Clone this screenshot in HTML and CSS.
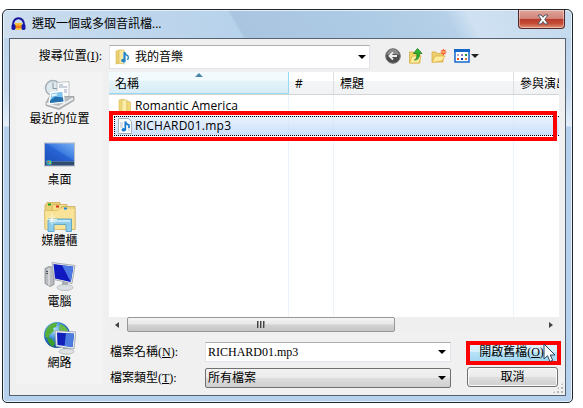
FILE: index.html
```
<!DOCTYPE html>
<html lang="zh-Hant">
<head>
    <meta charset="UTF-8">
    <meta name="viewport" content="width=device-width, initial-scale=1.0">
    <title>選取一個或多個音訊檔...</title>
    <link rel="stylesheet" href="styles.css">
</head>
<body>
    <div class="window">
        <div class="titlebar">
            <svg class="app-icon" width="15" height="15" viewBox="0 0 15 15">
                <path d="M4 6h7v6q-3.500 2-7 0z" fill="#fbc02a"/>
                <path d="M4 9l1-1 1 2 1-3 1 3 1-2 1 1v2H4z" fill="#f0701c"/>
                <path d="M2 9C1 -1.500 14 -1.500 13 9" fill="none" stroke="#14149c" stroke-width="2"/>
                <rect x="0.500" y="7" width="4" height="6" rx="1.800" fill="#1818a8"/>
                <rect x="10.500" y="7" width="4" height="6" rx="1.800" fill="#1818a8"/>
            </svg>
            <span class="title">選取一個或多個音訊檔...</span>
            <button class="close" aria-label="關閉">
                <svg width="12" height="11" viewBox="0 0 12 11">
                    <path d="M1 1h3.200L6 3.300 7.800 1H11L7.800 5.400 11 10H7.800L6 7.600 4.200 10H1l3.200-4.600z" fill="#fff" stroke="#545764" stroke-width="1"/>
                </svg>
            </button>
        </div>

        <div class="client">
            <div class="toolbar">
                <span class="look-label">搜尋位置<span class="key">(<u>I</u>):</span></span>
                <div class="look-in">
                    <svg width="15" height="16" viewBox="0 0 15 16">
                        <path d="M1 2l5-1v13l-5 1z" fill="#ecd070" stroke="#d6b650" stroke-width="0.600"/>
                        <path d="M4 1h5v14l-5-1z" fill="#f8e8a0" stroke="#d6b650" stroke-width="0.600"/>
                        <path d="M8 3l3 1v9l-3 2z" fill="#8ec4e4"/>
                        <path d="M9.500 11V3q1 3 3.500 4 1 2-.5 4" fill="none" stroke="#2684c4" stroke-width="1.400"/>
                        <ellipse cx="8.300" cy="11.500" rx="2.200" ry="1.700" fill="#2684c4"/>
                    </svg>
                    <span>我的音樂</span>
                    <i class="arrow"></i>
                </div>
                <div class="tools">
                    <svg width="16" height="16" viewBox="0 0 16 16">
                        <circle cx="8" cy="8" r="7.300" fill="#4c4c4c" stroke="#777"/>
                        <path d="M2 7a6 6 0 0 1 12 0q-6-2-12 0z" fill="#8c8c8c"/>
                        <path d="M12 8H5M8 4.500L4.500 8 8 11.500" fill="none" stroke="#eee" stroke-width="1.900"/>
                    </svg>
                    <svg width="16" height="16" viewBox="0 0 16 16">
                        <path d="M1.500 4h4l1 1.500H12V15H1.500z" fill="#f0d468" stroke="#d0a838" stroke-width="0.700"/>
                        <path d="M1.500 15L4 8h9l-2 7z" fill="#fbeb9c" stroke="#d8b040" stroke-width="0.700"/>
                        <path d="M6.500 12q3-1 2.300-6.500H5.500L9.500 0.500l4.500 5h-2.700q.5 6.500-4.800 6.500z" fill="#35b535" stroke="#147a1c" stroke-width="0.800"/>
                    </svg>
                    <svg width="16" height="16" viewBox="0 0 16 16">
                        <path d="M1 4h4l1 1.500h6V14H1z" fill="#ecd070" stroke="#d8a838" stroke-width="0.700"/>
                        <path d="M1 14.500L4 8h10l-3 5z" fill="#fcec9c" stroke="#dca93c" stroke-width="0.700"/>
                        <path d="M12.500 1v6.500M9.500 4h6M10.500 2l4 4M14.500 2l-4 4" stroke="#f06436" stroke-width="1.200"/>
                        <circle cx="12.500" cy="4" r="1.300" fill="#ffa060"/>
                    </svg>
                    <svg width="25" height="16" viewBox="0 0 25 16">
                        <rect x="1" y="2" width="14" height="12" fill="#fff" stroke="#1667cc" stroke-width="1.500"/>
                        <path d="M0 1h16v3H0z" fill="#1667cc"/>
                        <path d="M3 6h2v2H3z" fill="#b8a8c8"/>
                        <path d="M7 6h2v2H7z" fill="#8878c8"/>
                        <path d="M11 6h2v2h-2z" fill="#209030"/>
                        <path d="M3 10h2v2H3z" fill="#e85818"/>
                        <path d="M7 10h2v2H7z" fill="#103898"/>
                        <path d="M11 10h2v2h-2z" fill="#d87838"/>
                        <path d="M17 6h8l-4 4z" fill="#222"/>
                    </svg>
                </div>
            </div>

            <div class="content">
                <div class="places">
                    <div class="place">
                        <svg width="32" height="32" viewBox="0 0 32 32">
                            <circle cx="9" cy="9.500" r="7.500" fill="#dfe8ed" stroke="#a4b0b8" stroke-width="1.500"/>
                            <path d="M9 4v6h4" fill="none" stroke="#8898a0"/>
                            <path d="M13 4l12-1v16H13z" fill="#fafafa" stroke="#a8b0b8" stroke-width="0.700"/>
                            <path d="M15 6.500h4M15 8.500h8M20 11.500h3M20 13.500h3" stroke="#98a8c0"/>
                            <path d="M2 24l4-7 18 1 6 0v4l-15 9-13-4z" fill="#b8bcbf" stroke="#8c9498" stroke-width="0.700"/>
                            <path d="M7 14l12-1.500 1 11-15 1.500z" fill="#7cc4ec" stroke="#fff" stroke-width="1.500"/>
                            <path d="M6 22l5-4 8 1 .5 4-13.500 1.500z" fill="#2470b0"/>
                            <path d="M8 15.500l5-.5v2l-5 1z" fill="#e0f4fc"/>
                            <path d="M2.500 25l12 3.500L29 20" fill="none" stroke="#f4f4f4" stroke-width="1.500"/>
                        </svg>
                        <span>最近的位置</span>
                    </div>
                    <div class="place">
                        <svg width="32" height="32" viewBox="0 0 32 32">
                            <defs>
                                <linearGradient id="desk" x1="0" y1="1" x2="1" y2="0">
                                    <stop offset="0" stop-color="#1d50bc"/>
                                    <stop offset="0.500" stop-color="#2864d4"/>
                                    <stop offset="0.550" stop-color="#3d7ce0"/>
                                    <stop offset="1" stop-color="#78b0f4"/>
                                </linearGradient>
                            </defs>
                            <path d="M0 3h31v24H0z" fill="#b4bcc8"/>
                            <path d="M1 4h29v18H1z" fill="url(#desk)"/>
                            <path d="M1 22h29v4H1z" fill="#304c70"/>
                            <circle cx="5" cy="23" r="2.800" fill="#28a0c8"/>
                            <path d="M3.500 21.500H5V23H3.500z" fill="#f07030"/>
                            <path d="M5.500 21.500H7V23H5.500z" fill="#90d840"/>
                            <path d="M5.500 23.500H7v1H5.500z" fill="#fcd040"/>
                        </svg>
                        <span>桌面</span>
                    </div>
                    <div class="place">
                        <svg width="32" height="32" viewBox="0 0 32 32">
                            <path d="M1 5l2-3h13v26H1z" fill="#ecd078" stroke="#c8a448" stroke-width="0.700"/>
                            <path d="M8 7l1-3h14v24H8z" fill="#f4dc88" stroke="#c8a448" stroke-width="0.700"/>
                            <path d="M17 8l1-2h13v23H15z" fill="#f8e498" stroke="#c8a448" stroke-width="0.700"/>
                            <path d="M0.500 10h13l3-2.500H31V29H1z" fill="#f8e398" stroke="#d0b058" stroke-width="0.600"/>
                            <path d="M4 3h3v2H4z" fill="#18a018"/>
                            <path d="M12 5h3v2h-3z" fill="#d82c18"/>
                            <path d="M20 7h3v2h-3z" fill="#1888d8"/>
                            <path d="M4 18.500h23.500V31H22v-7H10v7H4z" fill="#90cdea" stroke="#4c9cc8" stroke-width="0.800"/>
                            <path d="M6 20.500h20" stroke="#d4f0fc" stroke-width="1.500"/>
                            <path d="M8 13v11M3 19h10M5 16l6 6M11 16l-6 6" stroke="#fffef0" stroke-width="0.800"/>
                        </svg>
                        <span>媒體櫃</span>
                    </div>
                    <div class="place">
                        <svg width="32" height="32" viewBox="0 0 32 32">
                            <path d="M1 7l4-2 5 1v17l-4 2-5-3z" fill="#b8bcc0" stroke="#787c80" stroke-width="0.700"/>
                            <path d="M5 7v17" stroke="#f0f0f0"/>
                            <path d="M2 10h2M2 12h2" stroke="#485058"/>
                            <path d="M8 1l23 3-3 18-18-4z" fill="#e4e8ec" stroke="#98a0a8" stroke-width="0.800"/>
                            <path d="M9.500 2.500L29.300 5.200 26.800 20.500 11 17z" fill="#1018c0"/>
                            <path d="M18 3.700l11.300 1.500-2.500 15.300z" fill="#4c78e4"/>
                            <path d="M18 20l6 1v5h-6z" fill="#a4acb0"/>
                            <ellipse cx="21" cy="26" rx="8" ry="3" fill="#dcdfe1" stroke="#a4a8ac" stroke-width="0.600"/>
                        </svg>
                        <span>電腦</span>
                    </div>
                    <div class="place">
                        <svg width="32" height="33" viewBox="0 0 32 33">
                            <defs>
                                <radialGradient id="globe" cx="0.400" cy="0.300" r="0.700">
                                    <stop offset="0" stop-color="#b8e8fc"/>
                                    <stop offset="0.500" stop-color="#3888d0"/>
                                    <stop offset="1" stop-color="#104890"/>
                                </radialGradient>
                            </defs>
                            <circle cx="13" cy="13" r="13" fill="url(#globe)"/>
                            <path d="M4 5q5-5 9-4l-1 4-3 1 1 3-4 3-2 5-3-3q0-6 3-9z" fill="#58b03c"/>
                            <path d="M16 2q6 2 8 7l-5 1-4-2z" fill="#6cbc44"/>
                            <path d="M3 15l5 2 3 4-2 4q-5-3-6-10z" fill="#3ca02c"/>
                            <path d="M11 8.500l21 1.500-2 17-18-2.500z" fill="#e6ecf0" stroke="#8c98a4" stroke-width="0.700"/>
                            <path d="M13 10.500l17 1.200-1.500 13.300-15-2z" fill="#1020b8"/>
                            <path d="M22 11.200l8 .5-1.500 13.300-8-1z" fill="#4c7ce0"/>
                            <path d="M19 25.500l6 .8V30h-6z" fill="#98a4ac"/>
                            <ellipse cx="22.500" cy="29.500" rx="7.500" ry="2.700" fill="#dee2e4" stroke="#a4a8ac" stroke-width="0.600"/>
                        </svg>
                        <span>網路</span>
                    </div>
                </div>

                <div class="main">
                    <div class="list">
                        <div class="head">
                            <span class="col name sorted">名稱<i class="sort"></i></span>
                            <span class="col num">#</span>
                            <span class="col track">標題</span>
                            <span class="col artist">參與演出者</span>
                        </div>
                        <div class="rows">
                            <div class="row folder">
                                <svg width="16" height="16" viewBox="0 0 16 16">
                                    <path d="M2 2l5-1v14l-5-1z" fill="#f0d878" stroke="#d8bc58" stroke-width="0.600"/>
                                    <path d="M5 2h5v13l-5-1z" fill="#faeea8" stroke="#d8bc58" stroke-width="0.600"/>
                                    <path d="M10 3l3.500 1v10L10 15z" fill="#f0d878" stroke="#d8bc58" stroke-width="0.600"/>
                                </svg>
                                <span>Romantic America</span>
                            </div>
                            <div class="row selected">
                                <svg width="16" height="16" viewBox="0 0 16 16">
                                    <path d="M1.500 0.500h10l3 3v12h-13z" fill="#f8fafc" stroke="#a8b0b8"/>
                                    <path d="M3 5h3M3 7h3M3 9h3M11 10h2M11 12h2" stroke="#b8c4d0"/>
                                    <path d="M8.300 12V3.500q.7 3 3.700 3.500v3" fill="none" stroke="#1a7cd0" stroke-width="1.700"/>
                                    <ellipse cx="6.800" cy="11.800" rx="2.300" ry="1.700" fill="#1a7cd0"/>
                                </svg>
                                <span>RICHARD01.mp3</span>
                            </div>
                        </div>
                        <div class="scrollbar">
                            <i class="left"></i>
                            <div class="thumb"><i></i><i></i><i></i></div>
                            <i class="right"></i>
                        </div>
                        <div class="mark file-mark"></div>
                    </div>

                    <div class="form">
                        <span class="form-label">檔案名稱<span class="key">(<u>N</u>):</span></span>
                        <div class="field">RICHARD01.mp3<i class="arrow"></i></div>
                        <div class="open-wrap">
                            <button class="btn open">開啟舊檔<span class="key">(<u>O</u>)</span></button>
                            <div class="mark"></div>
                            <svg class="cursor" width="14" height="20" viewBox="0 0 14 20">
                                <path d="M1 1v15l3.500-3.300L7 18.500l2.700-1.200L7.300 12H12z" fill="#fff" stroke="#28465c"/>
                            </svg>
                        </div>
                        <span class="form-label">檔案類型<span class="key">(<u>T</u>):</span></span>
                        <div class="field drop">所有檔案<i class="arrow"></i></div>
                        <button class="btn">取消</button>
                    </div>
                </div>
            </div>
            <div class="grip"></div>
        </div>
    </div>
</body>
</html>
```

FILE: styles.css
```
* {
    box-sizing: border-box;
}

body {
    margin: 0;
    padding: 9px 0 0 2px;
    background: #fff;
    overflow: hidden;
    font-family: "Open Sans", "Noto Sans CJK TC", sans-serif;
    font-size: 12px;
    line-height: 16px;
    color: #000;
}

svg {
    display: block;
    flex: none;
}

button {
    font: inherit;
    padding: 0;
}

.window {
    width: 571px;
    height: 394px;
    border: 1px solid #1f262c;
    border-radius: 6px 6px 5px 5px;
    background: linear-gradient(#b9d1ea 0, #c5daef 80px, #e4eef9 116px, #b4d0ec 117px, #b6d1ec 100%);
    box-shadow: inset 0 0 0 1px #e6f2fb;
    padding: 0 6px;
}

.titlebar {
    height: 28px;
    margin: 0 -5px;
    padding: 0 6px 0 7px;
    display: flex;
    border-radius: 5px 5px 0 0;
    border-top: 1px solid #e3eef8;
    background: linear-gradient(60deg, #cfdfef 0, #c0d7ed 20%, #b7d2eb 41%, #a9c5df 41.500%, #aecbe5 65%, #b5d0e8 78%, #cfe1f2 82%, #c4d9ed 100%);
}

.app-icon {
    margin-top: 6px;
}

.title {
    margin: 5px 0 0 6px;
    flex: 1;
}

.close {
    width: 47px;
    height: 19px;
    margin-top: -1px;
    display: flex;
    align-items: center;
    justify-content: center;
    border: 1px solid #54272b;
    border-top: 0;
    border-radius: 0 0 4px 4px;
    background: linear-gradient(#e0a79e 0, #d08276 48%, #b83a2a 50%, #c54d38 75%, #e09478 100%);
    box-shadow: inset 0 0 0 1px rgba(255, 255, 255, 0.4);
}

.close svg {
    margin-left: 3px;
}

.client {
    position: relative;
    height: 358px;
    border: 1px solid #56626f;
    background: #f0f0f0;
}

.toolbar {
    height: 33px;
    padding-top: 6px;
    display: flex;
}

.look-label {
    width: 92px;
    padding-top: 3px;
    text-align: right;
}

.key {
    font-family: "Liberation Serif", serif;
}

.look-in {
    width: 261px;
    height: 24px;
    margin-left: 7px;
    padding: 0 3px 0 5px;
    display: flex;
    align-items: center;
    gap: 5px;
    background: #fff;
    border: 1px solid #e2e3ea;
    border-top-color: #abadb3;
}

.arrow {
    width: 0;
    height: 0;
    margin-left: auto;
    border: 4px solid transparent;
    border-top-color: #000;
    border-bottom: 0;
}

.tools {
    display: flex;
    gap: 7px;
    margin: 3px 0 0 15px;
}

.content {
    display: flex;
    gap: 6px;
    padding-left: 6px;
}

.places {
    width: 87px;
    height: 312px;
    padding-top: 6px;
    background: #f3f3f3;
}

.place {
    height: 61px;
    display: flex;
    flex-direction: column;
    align-items: center;
}

.place svg {
    height: 33px;
}

.main {
    width: 450px;
}

.list {
    position: relative;
    height: 260px;
    display: flex;
    flex-direction: column;
    background: #fff;
}

.head {
    height: 23px;
    display: flex;
    overflow: hidden;
    border-bottom: 1px solid #d5d5d5;
    background: linear-gradient(#fff 40%, #f4f5f6 42%, #f1f2f4);
}

.col {
    position: relative;
    flex: none;
    padding: 4px 0 0 6px;
    border-right: 1px solid #dedfe1;
    white-space: nowrap;
}

.name {
    width: 180px;
}

.num {
    width: 45px;
}

.track {
    width: 180px;
}

.artist {
    width: 90px;
    border: 0;
}

.sorted {
    border-right-color: #96d9f9;
    border-bottom: 1px solid #96d9f9;
    background: linear-gradient(#f2fafd 40%, #e3f3f9 42%, #d8ecf6);
}

.sort {
    position: absolute;
    left: 86px;
    top: 1px;
    border: 4px solid transparent;
    border-top: 0;
    border-bottom-color: #4a87a8;
}

.rows {
    flex: 1;
    padding: 1px 0 0 5px;
    background:
        linear-gradient(#edf3fb, #edf3fb) 179px 0 / 1px 100% no-repeat,
        linear-gradient(#edf3fb, #edf3fb) 224px 0 / 1px 100% no-repeat,
        linear-gradient(#edf3fb, #edf3fb) 404px 0 / 1px 100% no-repeat;
}

.row {
    height: 20px;
    padding-left: 3px;
    display: flex;
    align-items: center;
    gap: 2px;
    letter-spacing: 0.250px;
}

.folder {
    letter-spacing: 0.080px;
}

.selected {
    padding-left: 2px;
    border: 1px dotted #000;
    border-right: 0;
    background: linear-gradient(rgba(218, 233, 252, 0.600), rgba(182, 211, 250, 0.700));
}

.scrollbar {
    height: 15px;
    display: flex;
    align-items: center;
    background: #efefef;
}

.left,
.right {
    border: 3px solid transparent;
}

.left {
    border-left: 0;
    border-right: 4px solid #444;
    margin-left: 6px;
}

.right {
    border-right: 0;
    border-left: 4px solid #444;
    margin: 0 6px 0 auto;
}

.thumb {
    width: 268px;
    height: 15px;
    margin-left: 8px;
    display: flex;
    align-items: center;
    justify-content: center;
    gap: 1px;
    border: 1px solid #979797;
    border-radius: 2px;
    background: linear-gradient(#f5f5f5, #e6e6e6 48%, #d3d3d3 52%, #c6c6c6);
}

.thumb i {
    width: 2px;
    height: 7px;
    border-left: 1px solid #444;
    background: #999;
}

.mark {
    position: absolute;
    border: 4px solid #f00;
    pointer-events: none;
}

.file-mark {
    left: 0;
    top: 39px;
    width: 448px;
    height: 30px;
}

.form {
    display: grid;
    grid-template-columns: 96px 246px 92px;
    grid-template-rows: 20px 20px;
    row-gap: 6px;
    padding-top: 10px;
}

.form-label {
    padding: 2px 0 0 1px;
}

.field {
    display: flex;
    align-items: center;
    padding: 0 4px 0 2px;
    border: 1px solid #e2e3ea;
    border-top-color: #abadb3;
    background: #fff;
    font-family: "Liberation Serif", "Noto Sans CJK TC", serif;
}

.drop {
    border: 1px solid #707070;
    border-radius: 2px;
    background: linear-gradient(#f2f2f2, #ebebeb 48%, #dddddd 52%, #cfcfcf);
}

.btn {
    width: 91px;
    height: 20px;
    margin: -1px 0 0 16px;
    border: 1px solid #707070;
    border-radius: 3px;
    background: linear-gradient(#f2f2f2, #ebebeb 48%, #dddddd 52%, #cfcfcf);
    box-shadow: inset 0 0 0 1px #fbfbfb;
    line-height: 16px;
}

.open-wrap {
    position: relative;
}

.open-wrap .mark {
    left: 15px;
    top: -1px;
    width: 95px;
    height: 24px;
}

.open {
    height: 20px;
    margin-top: 0;
    padding-right: 2px;
    border: 0;
    background: linear-gradient(#e5f5fd, #d4eefc 48%, #b8e3f9 52%, #a0d5f2);
}

.cursor {
    position: absolute;
    left: 92px;
    top: 1px;
}

.grip {
    position: absolute;
    right: 2px;
    bottom: 2px;
    width: 10px;
    height: 10px;
    background: radial-gradient(circle at 1px 1px, #b8b8b8 1px, transparent 1.300px) 0 0 / 4px 4px;
    clip-path: polygon(100% 0, 100% 100%, 0 100%);
}
```
